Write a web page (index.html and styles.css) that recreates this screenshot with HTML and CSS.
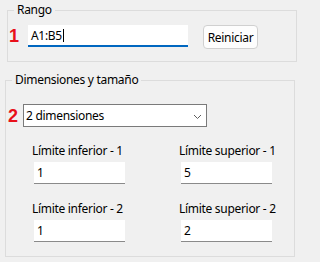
FILE: index.html
```html
<!DOCTYPE html>
<html lang="es">
<head>
<meta charset="utf-8">
<title>Rango</title>
<link rel="stylesheet" href="styles.css">
</head>
<body>
<div class="page">
  <fieldset class="group group-range">
    <legend class="group-title">Rango</legend>
    <div class="range-row">
      <span class="step">1</span>
      <div class="textbox active"><span class="value">A1:B5</span><span class="caret"></span></div>
      <button class="btn" type="button">Reiniciar</button>
    </div>
  </fieldset>
  <fieldset class="group group-dims">
    <legend class="group-title">Dimensiones y tamaño</legend>
    <div class="dims-row">
      <span class="step">2</span>
      <div class="select">
        <span class="value">2 dimensiones</span>
        <svg class="chevron" width="9" height="6" viewBox="0 0 9 6"><path d="M1 1 L4.5 4.5 L8 1" fill="none" stroke="#5f5f5f" stroke-width="1"/></svg>
      </div>
    </div>
    <div class="limits">
      <div class="field">
        <span class="label">Límite inferior - 1</span>
        <div class="textbox small"><span class="value">1</span></div>
      </div>
      <div class="field">
        <span class="label">Límite superior - 1</span>
        <div class="textbox small"><span class="value">5</span></div>
      </div>
      <div class="field">
        <span class="label">Límite inferior - 2</span>
        <div class="textbox small"><span class="value">1</span></div>
      </div>
      <div class="field">
        <span class="label">Límite superior - 2</span>
        <div class="textbox small"><span class="value">2</span></div>
      </div>
    </div>
  </fieldset>
</div>
</body>
</html>
```

FILE: styles.css
```css
html, body {
  margin: 0;
  padding: 0;
  background: #f0f0f0;
}
body {
  font-family: "Noto Sans", "Open Sans", "Liberation Sans", sans-serif;
  font-size: 12px;
  letter-spacing: -0.3px;
  color: #000;
  width: 300px;
  height: 262px;
  overflow: hidden;
}
.page {
  display: flex;
  flex-direction: column;
}
.group {
  border: 1px solid #dcdcdc;
  padding: 0;
  margin: 0;
  min-width: 0;
  width: 290px;
  box-sizing: border-box;
}
.group-title {
  margin-left: 6px;
  padding: 0 3px;
  line-height: 16px;
  height: 16px;
}
.group-range {
  margin: 2px 0 0 7px;
  padding-bottom: 12px;
}
.group-dims {
  margin: 10px 0 0 5px;
  padding-bottom: 14px;
}
.range-row {
  display: flex;
  align-items: flex-start;
  margin-top: 7px;
  padding-left: 1px;
}
.step {
  color: #e8101a;
  font-family: "Liberation Sans", Arial, sans-serif;
  font-weight: bold;
  font-size: 18px;
  line-height: 20px;
  letter-spacing: 0;
}
.range-row .step {
  width: 19px;
  margin-top: 1px;
}
.textbox {
  background: #fff;
  box-sizing: border-box;
  display: flex;
  align-items: center;
}
.textbox.active {
  width: 160px;
  height: 22px;
  border-bottom: 2px solid #0067c0;
  padding-left: 3px;
}
.caret {
  display: inline-block;
  width: 1px;
  height: 13px;
  background: #000;
  margin-left: 1px;
}
.btn {
  margin-left: 15px;
  width: 55px;
  height: 24px;
  box-sizing: border-box;
  border: 1px solid #d0d0d0;
  border-radius: 4px;
  background: #fdfdfd;
  font: inherit;
  letter-spacing: inherit;
  color: #000;
  padding: 0;
}
.dims-row {
  display: flex;
  align-items: center;
  margin-top: 16px;
  padding-left: 2px;
}
.dims-row .step {
  width: 15px;
}
.select {
  width: 184px;
  height: 23px;
  box-sizing: border-box;
  border: 1px solid #7a7a7a;
  background: #fff;
  display: flex;
  align-items: center;
  justify-content: space-between;
  padding: 0 4px 0 2px;
}
.chevron {
  display: block;
  margin-top: 2px;
}
.limits {
  display: grid;
  grid-template-columns: 147px 147px;
  row-gap: 17px;
  margin-top: 16px;
  padding-left: 26px;
}
.field {
  display: flex;
  flex-direction: column;
  align-items: flex-start;
}
.label {
  line-height: 16px;
}
.textbox.small {
  width: 91px;
  height: 22px;
  margin-top: 3px;
  margin-left: 2px;
  border-bottom: 1px solid #8a8a8a;
  padding-left: 3px;
}
```
